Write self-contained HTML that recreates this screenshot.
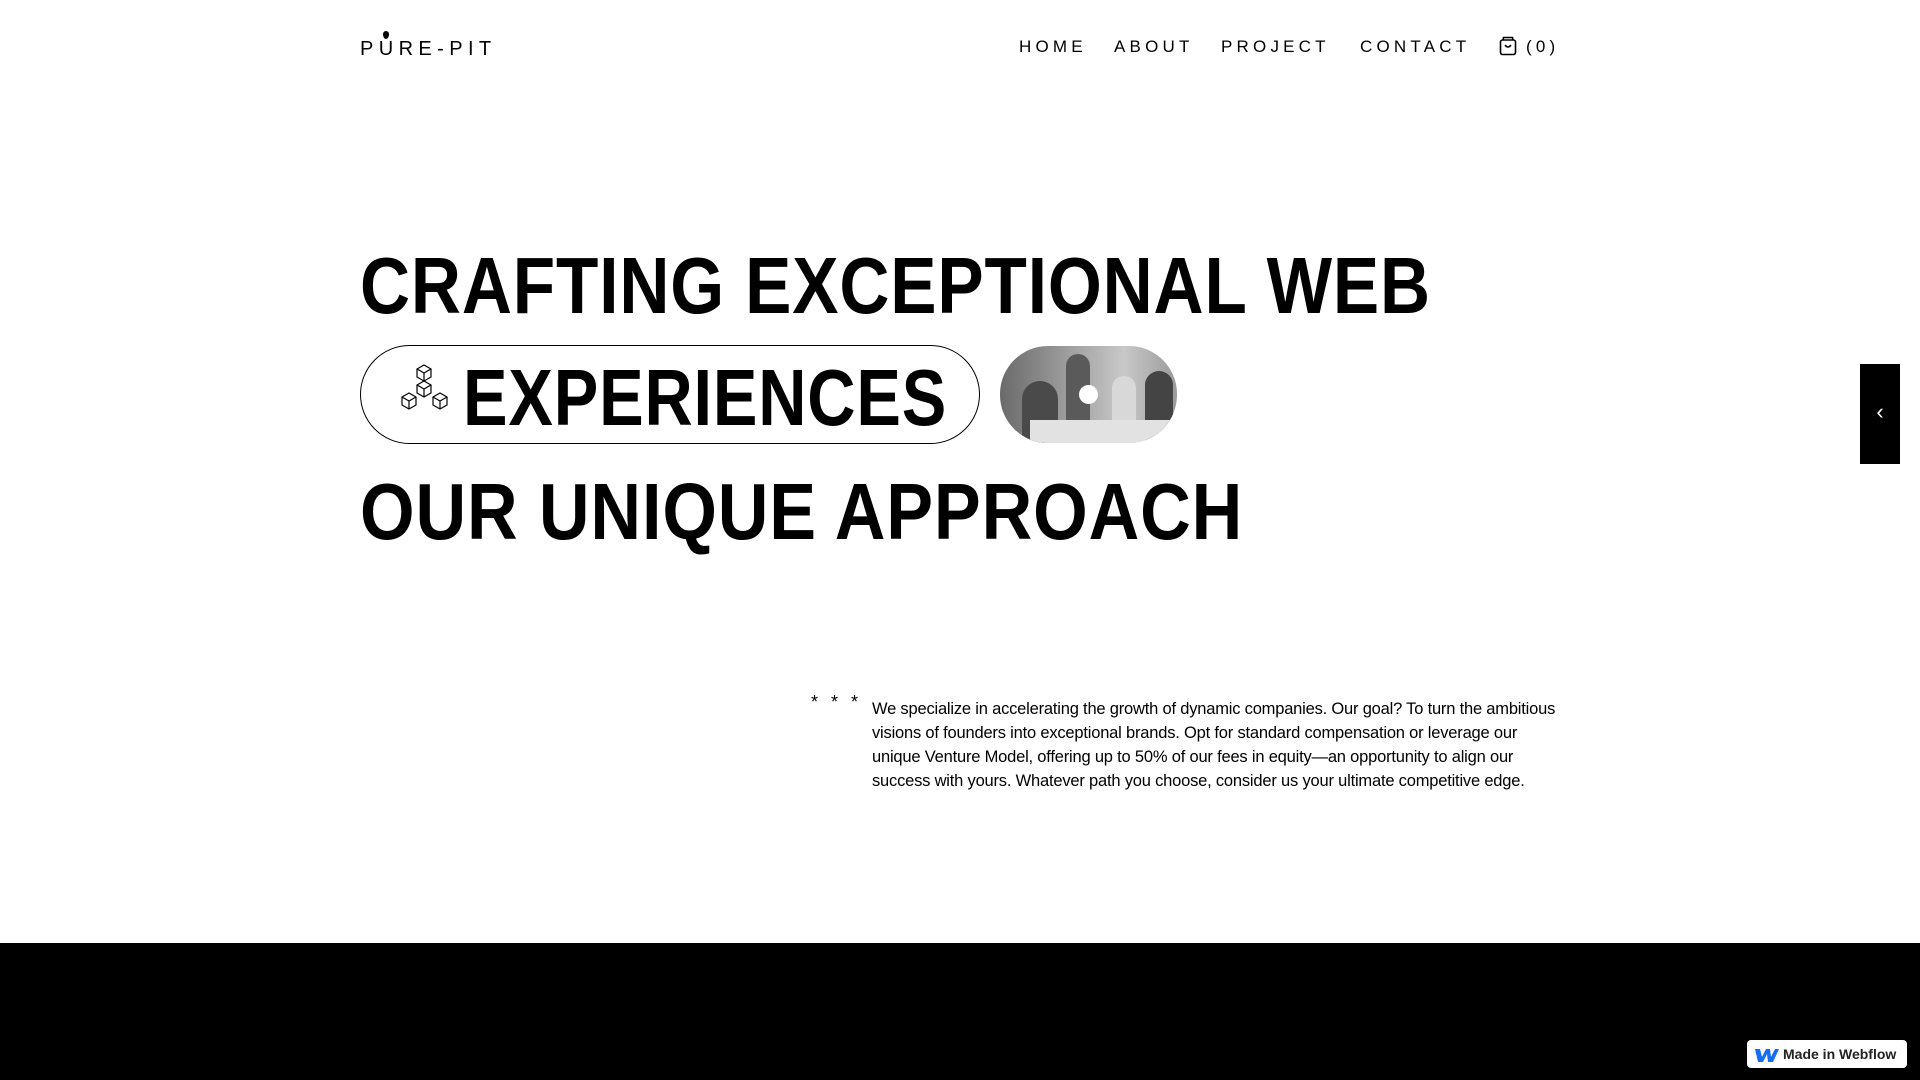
<!DOCTYPE html>
<html><head><meta charset="utf-8"><style>
*{margin:0;padding:0;box-sizing:border-box}
body{width:1920px;height:1080px;overflow:hidden;background:#fff;font-family:"Liberation Sans",sans-serif;color:#000;position:relative}
.abs{position:absolute}
.logo{left:360px;top:38px;font-size:20px;letter-spacing:5.4px;white-space:nowrap}
.nav{top:37px;font-size:17px;letter-spacing:4.2px;white-space:nowrap}
.h{left:360px;font-weight:bold;font-size:80px;white-space:nowrap;letter-spacing:1px;transform-origin:left top}
.pill{left:360px;top:345px;width:620px;height:99px;border:1.5px solid #000;border-radius:50px}
.img{left:1000px;top:346px;width:177px;height:97px;border-radius:48px;overflow:hidden;background:linear-gradient(90deg,#6a6a6a,#a0a0a0 40%,#c8c8c8 70%,#9a9a9a)}
p{left:872px;top:697px;font-size:16.5px;line-height:24px;letter-spacing:-0.2px;white-space:nowrap}
</style></head><body>
<div class="abs logo">PURE-PIT</div>
<div class="abs" style="left:383px;top:31px;width:6px;height:8px;background:#000;border-radius:50% 50% 50% 50%/40% 40% 60% 60%"></div>
<div class="abs nav" style="left:1019px">HOME</div>
<div class="abs nav" style="left:1114px">ABOUT</div>
<div class="abs nav" style="left:1221px">PROJECT</div>
<div class="abs nav" style="left:1360px">CONTACT</div>
<svg class="abs" style="left:1499px;top:36px" width="18" height="20" viewBox="0 0 18 20" fill="none" stroke="#000" stroke-width="1.6"><rect x="1.5" y="4" width="15" height="14.5" rx="2"/><path d="M4 4 L4.5 1.5 H13.5 L14 4"/><path d="M6 9 Q9 13 12 9"/></svg>
<div class="abs nav" style="left:1526px">(0)</div>

<div class="abs h" id="h1" style="top:240px">CRAFTING EXCEPTIONAL WEB</div>
<div class="abs pill"></div>
<svg class="abs" style="left:400px;top:364px" width="52" height="52" viewBox="0 0 52 52" fill="none" stroke="#000" stroke-width="1.2" stroke-linejoin="round">
<defs><g id="c"><path d="M0 4 L7 0 L14 4 L14 12 L7 16 L0 12 Z M0 4 L7 8 L14 4 M7 8 L7 16"/></g></defs>
<use href="#c" x="17" y="1"/><use href="#c" x="17" y="17"/><use href="#c" x="2" y="29"/><use href="#c" x="33" y="29"/>
</svg>
<div class="abs h" id="h2" style="top:352px;left:463px">EXPERIENCES</div>
<div class="abs img">
<div class="abs" style="left:22px;top:35px;width:36px;height:70px;background:#4a4a4a;border-radius:18px 18px 0 0"></div>
<div class="abs" style="left:66px;top:8px;width:24px;height:70px;background:#5a5a5a;border-radius:12px 12px 0 0"></div>
<div class="abs" style="left:112px;top:30px;width:24px;height:50px;background:#d8d8d8;border-radius:12px 12px 0 0"></div>
<div class="abs" style="left:145px;top:25px;width:28px;height:72px;background:#444;border-radius:14px 14px 0 0"></div>
<div class="abs" style="left:30px;top:74px;width:150px;height:30px;background:#e2e2e2"></div>
<div class="abs" style="left:79px;top:39px;width:19px;height:19px;background:#fff;border-radius:50%"></div>
</div>
<div class="abs h" id="h3" style="top:466px">OUR UNIQUE APPROACH</div>

<div class="abs" style="left:811px;top:692px;font-size:18px;letter-spacing:4px">* * *</div>
<p class="abs">We specialize in accelerating the growth of dynamic companies. Our goal? To turn the ambitious<br>visions of founders into exceptional brands. Opt for standard compensation or leverage our<br>unique Venture Model, offering up to 50% of our fees in equity—an opportunity to align our<br>success with yours. Whatever path you choose, consider us your ultimate competitive edge.</p>

<div class="abs" style="left:1860px;top:364px;width:40px;height:100px;background:#000;color:#fff;font-size:22px;text-align:center;line-height:96px">‹</div>
<div class="abs" style="left:0;top:943px;width:1920px;height:137px;background:#000"></div>
<div class="abs" style="left:1747px;top:1040px;width:160px;height:28px;background:#fff;border-radius:4px;font-size:14px;font-weight:bold;line-height:28px;padding-left:36px;color:#222">Made in Webflow</div>
<svg class="abs" style="left:1755px;top:1047px" width="24" height="15" viewBox="0 0 24 15"><path d="M0 2 H5 L7 10 L11 2 H15 L16 10 L20 2 H24 L18 15 H13 L12 7 L8 15 H3 Z" fill="#146ef5"/></svg>
<script>
function fit(id,w){var e=document.getElementById(id);var s=w/e.offsetWidth;e.style.transform='scaleX('+s+')';}
fit('h1',1071);fit('h2',484);fit('h3',883);
</script>
</body></html>
